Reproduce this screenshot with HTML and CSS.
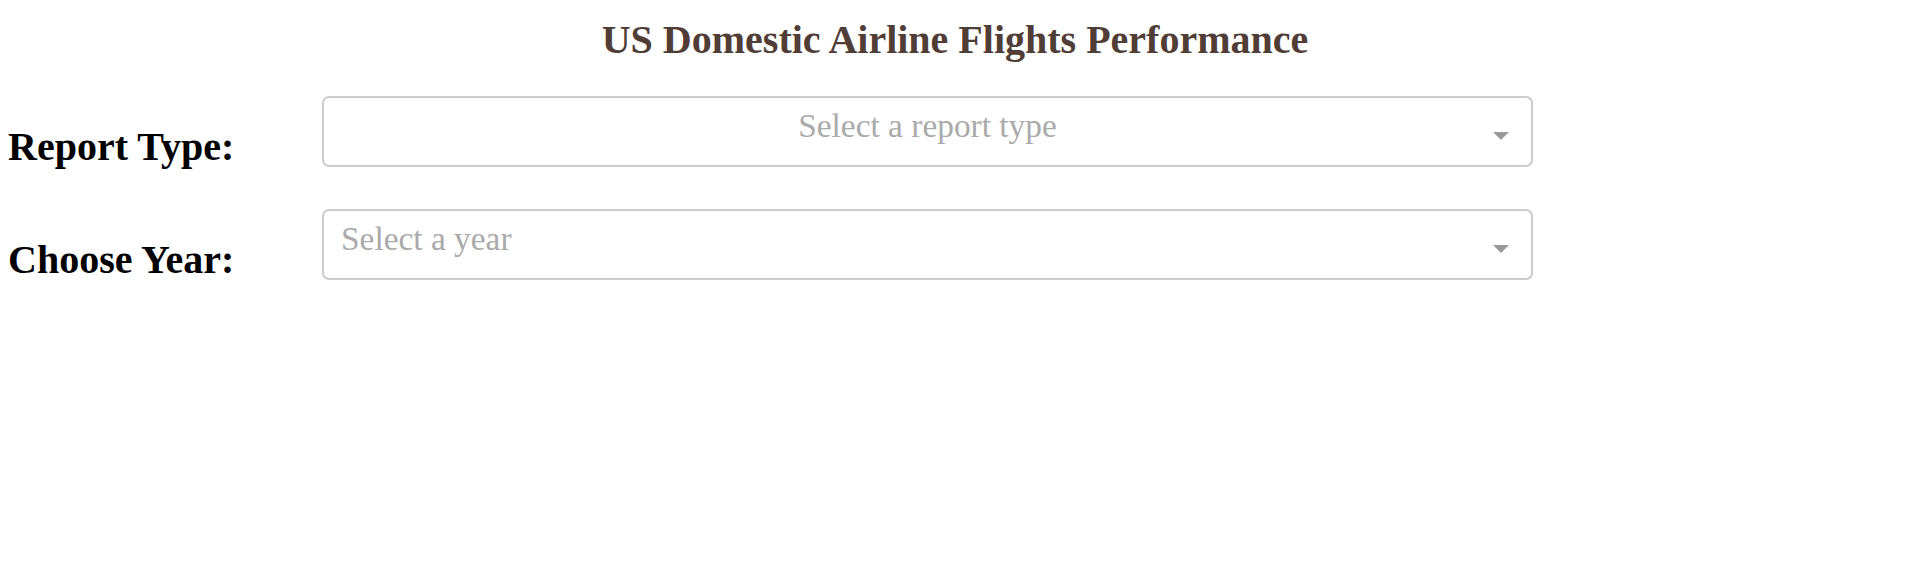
FILE: index.html
```html
<!DOCTYPE html>
<html lang="en">
<head>
<meta charset="utf-8">
<title>US Domestic Airline Flights Performance</title>
<link rel="stylesheet" href="styles.css">
</head>
<body>
<div class="page">
  <h1 class="title">US Domestic Airline Flights Performance</h1>
  <div class="row">
    <h2 class="label">Report Type:</h2>
    <div class="dropdown">
      <div class="control">
        <div class="placeholder placeholder-center">Select a report type</div>
        <span class="arrow"></span>
      </div>
    </div>
  </div>
  <div class="row">
    <h2 class="label">Choose Year:</h2>
    <div class="dropdown">
      <div class="control">
        <div class="placeholder">Select a year</div>
        <span class="arrow"></span>
      </div>
    </div>
  </div>
</div>
</body>
</html>
```

FILE: styles.css
```css
html, body {
  margin: 0;
  padding: 0;
  background: #ffffff;
}

.page {
  padding: 17px 8px 0 8px;
  font-family: "Liberation Serif", "Times New Roman", serif;
}

.title {
  margin: 0 0 30px 0;
  font-size: 40px;
  line-height: 46px;
  font-weight: bold;
  text-align: center;
  color: #503D36;
}

.row {
  display: flex;
  align-items: flex-start;
  width: 1528px;
}

.label {
  margin: 31px 0 36px 0;
  width: 311px;
  font-size: 40px;
  line-height: 46px;
  font-weight: bold;
  color: #000000;
  white-space: nowrap;
  flex: 0 0 auto;
}

.dropdown {
  flex: 1 1 auto;
  min-width: 0;
  padding: 3px;
}

.control {
  box-sizing: border-box;
  height: 71px;
  border: 2px solid #cccccc;
  border-radius: 7px;
  background: #ffffff;
  display: flex;
  align-items: flex-start;
}

.placeholder {
  flex: 1 1 auto;
  min-width: 0;
  margin-top: 9px;
  padding-left: 17px;
  font-size: 33.4px;
  color: #aaaaaa;
  white-space: nowrap;
}

.placeholder-center {
  text-align: center;
  padding-left: 38px;
  padding-right: 0;
}

.arrow {
  flex: 0 0 auto;
  width: 0;
  height: 0;
  margin-top: 34px;
  margin-right: 22px;
  border-top: 8px solid #999999;
  border-left: 8px solid transparent;
  border-right: 8px solid transparent;
}
```
